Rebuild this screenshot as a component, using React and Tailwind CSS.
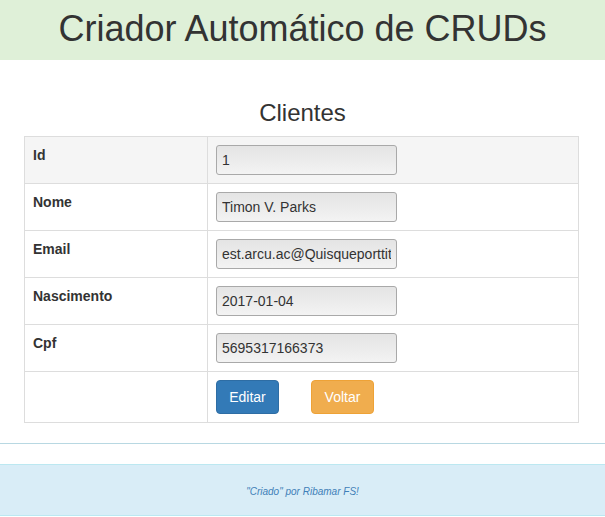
import React from "react";

const FIELDS = [
  { label: "Id", value: "1" },
  { label: "Nome", value: "Timon V. Parks" },
  { label: "Email", value: "est.arcu.ac@Quisqueporttitor.com" },
  { label: "Nascimento", value: "2017-01-04" },
  { label: "Cpf", value: "5695317166373" },
];

export default function App() {
  return (
    <div className="min-h-[517px] bg-white text-[#333] font-['Liberation_Sans',Arial,sans-serif]">
      <div className="h-[60px] bg-[#dff0d8] flex items-center justify-center">
        <h1 className="text-[36px] leading-none pb-[2px]">Criador Automático de CRUDs</h1>
      </div>

      <h3 className="mt-[40px] mb-[10px] text-center text-[24px] leading-[26px]">Clientes</h3>

      <table className="ml-[24px] w-[555px] border-collapse border border-[#ddd] text-[14px]">
        <tbody>
          {FIELDS.map((f, i) => (
            <tr key={f.label} className={i === 0 ? "bg-[#f5f5f5]" : "bg-white"}>
              <td className="w-[183px] border border-[#ddd] p-[8px] align-top font-bold leading-[20px]">
                {f.label}
              </td>
              <td className="border border-[#ddd] p-[8px] align-top">
                <input
                  readOnly
                  value={f.value}
                  className="block w-[181px] h-[30px] px-[5px] rounded-[3px] border border-[#a9a9a9] bg-gradient-to-b from-[#e4e4e4] to-[#f3f3f3] text-[14px] text-[#333] outline-none"
                />
              </td>
            </tr>
          ))}
          <tr>
            <td className="border border-[#ddd] p-[8px]"></td>
            <td className="border border-[#ddd] px-[8px] py-[8px]">
              <div className="flex gap-[32px]">
                <button className="w-[63px] h-[34px] rounded-[4px] bg-[#337ab7] border border-[#2e6da4] text-white text-[14px]">
                  Editar
                </button>
                <button className="w-[63px] h-[34px] rounded-[4px] bg-[#f0ad4e] border border-[#eea236] text-white text-[14px]">
                  Voltar
                </button>
              </div>
            </td>
          </tr>
        </tbody>
      </table>

      <hr className="mt-[20px] border-0 border-t border-[#b8d8e2]" />

      <div className="mt-[20px] h-[52px] bg-[#d9edf7] border-y border-[#bce8f1] flex items-center justify-center">
        <p className="pt-[3px] text-[10px] italic text-[#3f7fb8]">"Criado" por Ribamar FS!</p>
      </div>
    </div>
  );
}
